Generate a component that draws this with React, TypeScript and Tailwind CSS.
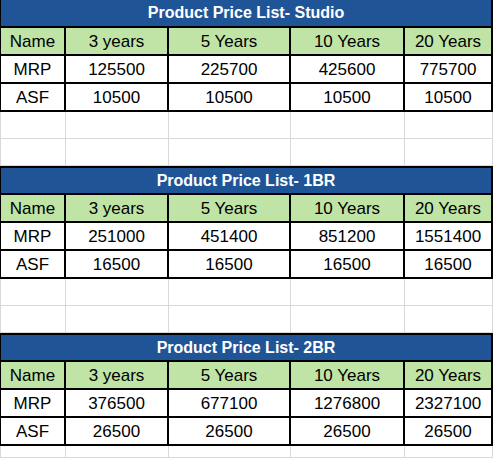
import clsx from 'clsx'

type Section = {
  title: string
  mrp: string[]
  asf: string[]
}

const SECTIONS: Section[] = [
  {
    title: 'Product Price List- Studio',
    mrp: ['125500', '225700', '425600', '775700'],
    asf: ['10500', '10500', '10500', '10500'],
  },
  {
    title: 'Product Price List- 1BR',
    mrp: ['251000', '451400', '851200', '1551400'],
    asf: ['16500', '16500', '16500', '16500'],
  },
  {
    title: 'Product Price List- 2BR',
    mrp: ['376500', '677100', '1276800', '2327100'],
    asf: ['26500', '26500', '26500', '26500'],
  },
]

const HEADERS = ['Name', '3 years', '5 Years', '10 Years', '20 Years']

// column widths follow the sheet's gridlines
const COLS = 'grid grid-cols-[65px_103px_122px_114px_88px]'

function PriceTable({ section, first }: { section: Section; first: boolean }) {
  const rows = [
    ['MRP', ...section.mrp],
    ['ASF', ...section.asf],
  ]
  return (
    <div className={clsx('w-[493px] border-l border-black', !first && 'border-t-2')}>
      <div
        className={clsx(
          'flex items-center justify-center border-r-2 border-b-2 border-black bg-[#1f5597] text-[16px] font-bold text-white',
          first ? 'h-[28px]' : 'h-[27px]'
        )}
      >
        {section.title}
      </div>
      <div className={COLS}>
        {HEADERS.map((h) => (
          <div
            key={h}
            className="flex h-[28px] items-center justify-center border-r-2 border-b-2 border-black bg-[#bfe4a6] text-black"
          >
            {h}
          </div>
        ))}
      </div>
      {rows.map((row) => (
        <div key={row[0]} className={COLS}>
          {row.map((cell, i) => (
            <div
              key={i}
              className="flex h-[28px] items-center justify-center border-r-2 border-b-2 border-black bg-white text-black"
            >
              {cell}
            </div>
          ))}
        </div>
      ))}
    </div>
  )
}

function BlankRow({ height }: { height: string }) {
  return (
    <div className={clsx('w-[493px] border-l border-[#d9d9d9]', COLS)}>
      {HEADERS.map((h) => (
        <div key={h} className={clsx('border-r border-b border-[#d9d9d9]', height)} />
      ))}
    </div>
  )
}

export default function App() {
  return (
    <div className="h-[463px] w-[494px] overflow-hidden bg-white font-['Liberation_Sans',Arial,sans-serif] text-[17px] leading-none">
      {SECTIONS.map((s, i) => (
        <div key={s.title}>
          <PriceTable section={s} first={i === 0} />
          {i < SECTIONS.length - 1 ? (
            <>
              <BlankRow height="h-[27px]" />
              <BlankRow height="h-[27px]" />
            </>
          ) : (
            <BlankRow height="h-[12px]" />
          )}
        </div>
      ))}
    </div>
  )
}
